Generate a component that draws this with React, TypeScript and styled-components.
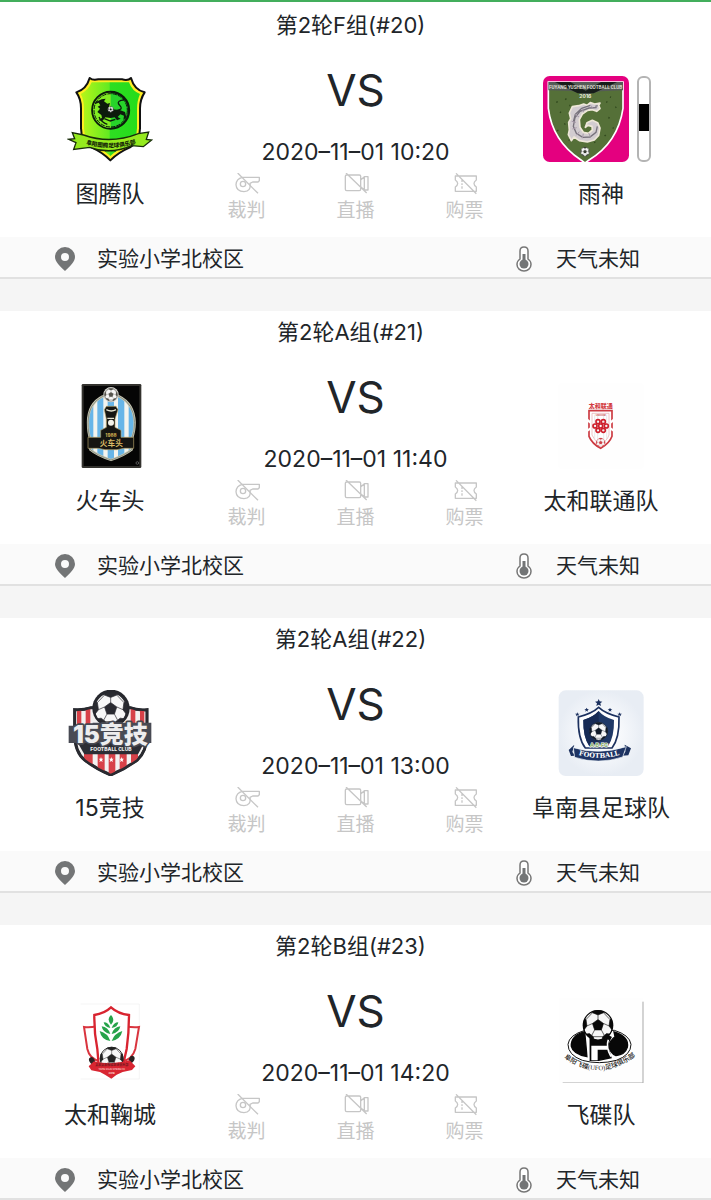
import React, { useId } from "react";
import styled, { createGlobalStyle } from "styled-components";

const GlobalStyle = createGlobalStyle`
  * { box-sizing: border-box; }
  body {
    margin: 0;
    background: #f5f5f5;
    color: #212529;
    font-family: Inter, "Noto Sans CJK SC", sans-serif;
    font-size: 21px;
  }
`;

const Page = styled.main`
  border-top: 2px solid #43ae5c;
`;

const MatchList = styled.ul`
  list-style: none;
  margin: 0;
  padding: 2px 0 0;
  display: flex;
  flex-direction: column;
  gap: 32px;
  background: linear-gradient(#fff 0 4px, transparent 4px);
`;

const Card = styled.li`
  background: #fff;
`;

const Title = styled.h2`
  margin: 0;
  padding: 8px 10px 0 0;
  font-size: 22px;
  font-weight: 400;
  line-height: 26px;
  text-align: center;
`;

const Body = styled.div`
  display: grid;
  grid-template-columns: 220px 1fr 220px;
`;

const Team = styled.div`
  display: flex;
  flex-direction: column;
  align-items: center;
  gap: 16px;
  padding-top: 38px;
`;

const Crest = styled.div`
  display: flex;
  gap: 8px;
`;

const CrestSvg = styled.svg`
  display: block;
  width: 86px;
  height: 86px;
`;

const Kit = styled.span<{ $color: string }>`
  width: 14px;
  margin-right: 8px;
  border: 2px solid #b4b4b4;
  border-radius: 6px;
  background: linear-gradient(#fff 0 32%, ${(p) => p.$color} 32% 65%, #fff 65%);
`;

const TeamName = styled.div`
  font-size: 23px;
  line-height: 32px;
  white-space: nowrap;
`;

const Centre = styled.div`
  display: flex;
  flex-direction: column;
  align-items: center;
  padding: 26px 0 12px;
`;

const Versus = styled.div`
  font-size: 44px;
  line-height: 52px;
`;

const Kickoff = styled.time`
  margin-top: 22px;
  font-size: 23px;
  line-height: 28px;
  white-space: nowrap;
`;

const Services = styled.div`
  display: flex;
  gap: 71px;
  margin-top: 7px;
`;

const Service = styled.button`
  display: flex;
  flex-direction: column;
  align-items: center;
  width: 38px;
  padding: 0;
  border: 0;
  background: none;
  color: #c6c6c6;
  font-family: inherit;
  font-size: 19px;
  line-height: 28px;
  white-space: nowrap;
`;

const ServiceSvg = styled.svg`
  display: block;
  width: 26px;
  height: 22px;
  margin-bottom: 2px;
  fill: none;
  stroke: currentColor;
  stroke-width: 4;
  stroke-linejoin: round;
`;

const Info = styled.footer`
  display: grid;
  grid-template-columns: 1fr 199px;
  padding-left: 53px;
  background: #fafafa;
  border-bottom: 2px solid #e1e1e1;
`;

const InfoItem = styled.div`
  display: flex;
  align-items: center;
  gap: 20px;
  height: 40px;
  padding-top: 4px;
  line-height: 36px;
  white-space: nowrap;
`;

const InfoSvg = styled.svg`
  width: 24px;
  height: 26px;
`;

type BallProps = { cx: number; cy: number; r: number; dark?: string };

function Ball({ cx, cy, r, dark = "#111" }: BallProps) {
  const id = useId();
  return (
    <g transform={`translate(${cx} ${cy}) scale(${r / 50})`}>
      <clipPath id={id}>
        <circle r="49" />
      </clipPath>
      <circle r="48" fill="#f7f7f7" stroke={dark} strokeWidth="4" />
      <g clipPath={`url(#${id})`} fill={dark} stroke={dark} strokeWidth="2">
        <path d="M0-19 18-6 11 15H-11L-18-6Z" />
        <path d="M-16-50-18-41 0-34 18-41 16-50Z" />
        <path d="M50-22 39-19 36 2 45 14 54 8Z" />
        <path d="M-50-22-39-19-36 2-45 14-54 8Z" />
        <path d="M14 50 15 37 28 27 42 29 38 46Z" />
        <path d="M-14 50-15 37-28 27-42 29-38 46Z" />
        <path
          fill="none"
          d="M0-19V-34M18-6 36 2M11 15 20 32M-11 15-20 32M-18-6-36 2M18-41 39-19M-18-41-39-19M45 14 42 29M-45 14-42 29M-15 37H15"
        />
      </g>
    </g>
  );
}

function TotemCrest() {
  return (
    <CrestSvg viewBox="51 48 258 258" role="img" aria-label="图腾队">
      <defs>
        <linearGradient id="totem">
          <stop offset="0" stopColor="#b9f519" />
          <stop offset=".48" stopColor="#62ea22" />
          <stop offset=".5" stopColor="#2ede22" />
          <stop offset="1" stopColor="#24dc1a" />
        </linearGradient>
        <path id="totem-arc" d="M102 250Q181 277 270 247" />
      </defs>
      <path
        d="M119 54Q128 62 145 58H216Q234 63 243 54Q253 90 284 97Q270 118 270 145V205Q270 245 240 262Q205 277 181 301Q158 277 124 262Q93 245 93 205V145Q93 116 79 97Q109 88 119 54Z"
        fill="#ffed22"
        stroke="#111"
        strokeWidth="6"
        strokeLinejoin="round"
      />
      <path
        d="M125 67H237Q246 93 270 102Q261 122 261 147V205Q261 238 234 253Q202 269 181 288Q160 269 130 253Q102 238 102 205V147Q102 118 92 102Q116 90 125 67Z"
        fill="url(#totem)"
      />
      <circle cx="182" cy="151" r="55" fill="#27d32a" stroke="#0c1b0c" strokeWidth="7" />
      <path d="M182 98A53 53 0 0 0 182 204Z" fill="#82ed22" />
      <circle cx="182" cy="151" r="50" fill="none" stroke="#0c1b0c" strokeWidth="3" strokeDasharray="13 3" />
      <path
        d="M137 126l18-8 12-2-5 8 10 7 8-2-4 14 11 5 22 2 16 6 4 16-9 8 2-13-11-4-8 8 9 5-11 5-7-9-12 2-16-2-8 10-13-1 11-8-2-8-12-9 8-10-7-6 8-4-5-8-12 5Z"
        fill="#0c1b0c"
      />
      <path
        d="M202 151q19-3 8-14-12-11 3-16 14 0 7-10M147 171q7 16 25 22M163 176l18 7 15-5"
        fill="none"
        stroke="#0c1b0c"
        strokeWidth="4"
      />
      <Ball cx={182} cy={148} r={9} />
      <path
        d="M67 218 101 225Q181 254 265 221L296 216 289 238 305 240 280 260 245 257Q181 285 119 262L71 268 78 248 56 238 74 236Z"
        fill="#95ea1e"
        stroke="#172c09"
        strokeWidth="4"
      />
      <text fontSize="17" fontWeight="900" fill="#142607">
        <textPath href="#totem-arc" startOffset="6">阜阳图腾足球俱乐部</textPath>
      </text>
      <text x="182" y="275" fontSize="8" textAnchor="middle" fontWeight="700" fill="#142607">
        FYTTFC
      </text>
    </CrestSvg>
  );
}

function YushenCrest() {
  const id = useId();
  return (
    <CrestSvg viewBox="42 48 258 258" role="img" aria-label="雨神">
      <clipPath id={id}>
        <rect x="42" y="48" width="258" height="258" rx="20" />
      </clipPath>
      <g clipPath={`url(#${id})`}>
        <rect x="42" y="48" width="258" height="258" fill="#e4007f" />
        <path
          d="M58 66H282V145Q267 247 180 300L168 309 156 300Q70 243 58 145Z"
          fill="#557038"
          stroke="#fff"
          strokeWidth="5"
        />
        <path d="M58 66H282V91L214 94 170 104 128 93 58 91Z" fill="#555b57" />
        <path d="M78 66H124L170 92 216 66H264L194 100H146Z" fill="#171d1a" />
        <path
          d="M82 125l4 2M109 116l3 3M93 156l3 2M106 193l3-2M85 210l2 3M119 239l3 2M232 125l3 2M259 143l3-2M238 173l4 1M251 203l3 2M227 225l3 3M196 246l3 2M121 137l3-1M243 111l3 1"
          stroke="#31491e"
          strokeWidth="5"
        />
        <text x="170" y="86" fontSize="14" fontWeight="600" textAnchor="middle" fill="#e4e4dc" fontFamily="Roboto">
          FUYANG YUSHEN FOOTBALL CLUB
        </text>
        <text x="169" y="114" fontSize="15" fontWeight="700" textAnchor="middle" fill="#f1eee0">
          2016
        </text>
        <path
          d="M213 129 209 136 213 146 203 154 190 149 176 151 160 162 151 179 153 202 163 217 178 220 190 210 189 199 177 196 169 202 174 188 190 181 206 188 213 204 209 226 196 240 175 246 151 242 135 231 127 242 118 224 121 210 119 187 125 176 121 159 130 140 149 137 164 132 174 136 184 128 197 132Z"
          fill="#d2ccd0"
          stroke="#eee7d8"
          strokeWidth="5"
          strokeLinejoin="round"
        />
        <path
          d="M203 143l-23 1-27 10-15 19-5 26 9 21 19 12 22-1 18-14 4-18M184 136l-26 9-19 18-6 23M199 139l7-2"
          fill="none"
          stroke="#77727c"
          strokeWidth="4"
        />
        <path d="M128 184l13 3M130 207l13-4M142 226l9-11M160 235l3-14M184 230l-5-11M139 163l11 8M160 147l4 10M187 137l3 7" stroke="#a89aaa" strokeWidth="3" />
        <Ball cx={168} cy={275} r={14} dark="#3a3f34" />
      </g>
    </CrestSvg>
  );
}

function TrainCrest() {
  const id = useId();
  const shield = "M128 79Q84 101 84 157Q84 190 91 207V239Q111 256 153 270Q194 256 215 239V207Q224 186 224 157Q222 101 177 79Z";
  return (
    <CrestSvg viewBox="21 39 258 258" role="img" aria-label="火车头">
      <clipPath id={id}>
        <path d={shield} />
      </clipPath>
      <rect x="65" y="42" width="179" height="252" rx="4" fill="#33322e" />
      <rect x="71" y="48" width="167" height="240" fill="#050505" />
      <g clipPath={`url(#${id})`}>
        <path fill="#f3f4ef" d="M80 70H230V275H80Z" />
        <path d="M84 70h16v200H84ZM112 70h18v200h-18ZM143 70h19v200h-19ZM174 70h19v200h-19ZM206 70h18v200h-18Z" fill="#67b5e8" />
      </g>
      <path d={shield} fill="none" stroke="#c8c6b3" strokeWidth="7" />
      <path d={shield} fill="none" stroke="#68776e" strokeWidth="2" />
      <path
        d="M139 109H168L174 119 165 147V172L183 181V202H221V235H192L171 239H135L115 235H84V202H122V181L139 172V147L133 119Z"
        fill="#151512"
        stroke="#b6a46b"
        strokeWidth="2"
      />
      <path d="M139 119q15 8 29 0M142 145h20" stroke="#e5e3cf" strokeWidth="4" fill="none" />
      <circle cx="153" cy="158" r="9" fill="#f3f2e9" />
      <circle cx="153" cy="74" r="23" fill="#dadad4" />
      <Ball cx={153} cy={74} r={20} dark="#55544e" />
      <text x="153" y="200" fontSize="14" fontWeight="800" textAnchor="middle" fill="#c8a84e">
        1988
      </text>
      <text x="154" y="227" fontSize="23" fontWeight="700" textAnchor="middle" fill="#d8b965">
        火车头
      </text>
      <circle cx="232" cy="279" r="4" fill="none" stroke="#777" strokeWidth="2" />
    </CrestSvg>
  );
}

function UnicomCrest() {
  return (
    <CrestSvg viewBox="54 39 258 258" role="img" aria-label="太和联通队">
      <rect x="54" y="39" width="258" height="258" rx="12" fill="#fefefe" />
      <text x="182" y="113" fontSize="18" fontWeight="900" textAnchor="middle" fill="#d23b42">
        太和联通
      </text>
      <path d="M147 122H216V199Q208 221 182 235 156 221 147 199Z" fill="#fff" stroke="#cc3a41" strokeWidth="5" />
      <path d="M156 130H207V195Q201 213 182 224 163 213 156 195Z" fill="none" stroke="#e5a8aa" strokeWidth="2" />
      <path d="M164 134v73M173 134v80M191 134v80M200 134v73" stroke="#dedede" strokeWidth="2" />
      <path d="M142 150 152 158M221 150l-10 8M142 182l10-7M221 182l-10-7" stroke="#fff" strokeWidth="7" />
      <text x="182" y="137" fontSize="7" fontWeight="700" textAnchor="middle" fill="#c84c50">
        UNICOM
      </text>
      <g fill="none" stroke="#ce1f2b" strokeWidth="5">
        <circle cx="174" cy="155" r="6" />
        <circle cx="190" cy="155" r="6" />
        <circle cx="165" cy="168" r="6" />
        <circle cx="199" cy="168" r="6" />
        <circle cx="182" cy="168" r="6" />
        <circle cx="174" cy="181" r="6" />
        <circle cx="190" cy="181" r="6" />
      </g>
      <Ball cx={182} cy={218} r={14} dark="#cf4248" />
    </CrestSvg>
  );
}

function FifteenCrest() {
  const id = useId();
  const shield = "M124 98Q98 106 74 104V176Q74 231 105 256Q139 282 182 300Q225 282 261 256Q291 229 291 176V104Q264 107 240 98Z";
  return (
    <CrestSvg viewBox="51 45 258 258" role="img" aria-label="15竞技">
      <clipPath id={id}>
        <path d={shield} />
      </clipPath>
      <path d={shield} fill="#f3f1f0" stroke="#292a30" strokeWidth="9" />
      <g clipPath={`url(#${id})`}>
        <path d="M81 100h13v60H81ZM107 100h14v60h-14ZM242 100h14v60h-14ZM270 100h13v60h-13Z" fill="#d74148" />
        <path d="M102 235h26v65h-26ZM143 235h21v65h-21ZM176 235h20v65h-20ZM209 235h21v65h-21ZM243 235h21v65h-21Z" fill="#d74148" />
        <path d="M72 184H293L264 238H103Z" fill="#2c2d34" />
      </g>
      <path d={shield} fill="none" stroke="#292a30" strokeWidth="7" />
      <circle cx="183" cy="100" r="56" fill="#26272d" />
      <Ball cx={182} cy={102} r={51} dark="#292a30" />
      <path d="M56 152H128V143H304V204H56Z" fill="#484a53" />
      <text
        x="181"
        y="203"
        fontSize="72"
        fontWeight="900"
        textAnchor="middle"
        fill="#ededee"
        stroke="#484a53"
        strokeWidth="10"
        strokeLinejoin="round"
        paintOrder="stroke"
      >
        15竞技
      </text>
      <text x="183" y="228" fontSize="15" fontWeight="800" textAnchor="middle" fill="#eee">
        FOOTBALL CLUB
      </text>
      <g fill="#fff">
        {[153, 184, 215].map((x) => (
          <path key={x} d={`M${x} 246l2 5h5l-4 4 2 6-5-3-5 3 2-6-4-4h5Z`} />
        ))}
      </g>
    </CrestSvg>
  );
}

function FunanCrest() {
  return (
    <CrestSvg viewBox="99 45 258 258" role="img" aria-label="阜南县足球队">
      <defs>
        <radialGradient id="funan">
          <stop offset="0" stopColor="#fff" />
          <stop offset=".45" stopColor="#f7f9fc" />
          <stop offset="1" stopColor="#e8edf4" />
        </radialGradient>
        <path id="funan-arc" d="M158 239Q223 259 292 237" />
      </defs>
      <rect x="101" y="46" width="255" height="257" rx="21" fill="url(#funan)" />
      <g fill="#1c315f">
        <path d="M221 72l3 7 8 1-6 5 2 8-7-4-7 4 2-8-6-5 8-1Z" />
        <path d="M185 98l2 4h5l-4 3 1 5-4-3-4 3 1-5-4-3h5ZM255 98l2 4h5l-4 3 1 5-4-3-4 3 1-5-4-3h5ZM157 112l2 4h5l-4 3 1 5-4-3-4 3 1-5-4-3h5ZM284 112l2 4h5l-4 3 1 5-4-3-4 3 1-5-4-3h5Z" />
      </g>
      <path
        d="M221 97Q202 115 160 126 158 190 181 219H261Q284 189 282 126 240 115 221 97Z"
        fill="#fff"
        stroke="#1c315f"
        strokeWidth="5"
      />
      <path d="M221 108Q204 127 175 135 174 186 193 214H249Q268 186 267 135 237 127 221 108Z" fill="#203967" />
      <path d="M175 135Q205 126 221 108V214H193Q174 186 175 135Z" fill="#172b55" />
      <Ball cx={221} cy={169} r={28} dark="#111a28" />
      <text x="222" y="216" fontSize="16" fontWeight="700" textAnchor="middle" fill="#82a85c" stroke="#fff" strokeWidth="3" paintOrder="stroke">
        A·B·FC
      </text>
      <path d="M131 225 148 209 142 231 151 242 138 243ZM318 220 299 209 301 230 292 242 310 241Z" fill="#1c315f" />
      <path d="M145 218Q221 241 304 215L293 246Q221 270 149 247Z" fill="#1e3464" stroke="#eef4f9" strokeWidth="2" />
      <text fontSize="20" fontWeight="700" fill="#fff" fontFamily="DejaVu Serif">
        <textPath href="#funan-arc" startOffset="3">FOOTBALL</textPath>
      </text>
    </CrestSvg>
  );
}

function CuchengCrest() {
  const id = useId();
  return (
    <CrestSvg viewBox="51 36 258 258" role="img" aria-label="太和鞠城">
      <clipPath id={id}>
        <path d="M125 180H240V242H125Z" />
      </clipPath>
      <path d="M92 57H268V282H92" fill="none" stroke="#f0f0f0" strokeWidth="2" />
      <path d="M102 126Q120 128 140 124L151 229Q119 223 112 192ZM267 126Q250 128 227 124L217 229Q247 223 256 192Z" fill="#fff" stroke="#d9343e" strokeWidth="6" />
      <path d="M183 67Q164 85 133 90 132 143 142 192L146 240H219L230 192Q237 142 237 90 204 86 183 67Z" fill="#fff" stroke="#d82430" strokeWidth="7" />
      <g clipPath={`url(#${id})`}>
        <Ball cx={185} cy={221} r={36} dark="#232323" />
      </g>
      <path d="M183 90Q169 103 183 119 197 105 183 90Z" fill="#26a34a" />
      <g fill="#26a34a">
        <path d="M181 129Q176 112 161 112 163 126 181 129ZM185 129Q191 112 205 112 203 127 185 129ZM181 147Q174 126 155 124 158 143 181 147ZM185 147Q192 126 211 124 208 143 185 147ZM181 168Q173 144 149 138 154 165 181 168ZM185 168Q193 145 217 138 212 163 185 168Z" />
      </g>
      <ellipse cx="126" cy="227" rx="8" ry="11" fill="#292222" transform="rotate(-30 126 227)" />
      <ellipse cx="245" cy="223" rx="8" ry="11" fill="#292222" transform="rotate(25 245 223)" />
      <path d="M116 244 132 229Q184 242 239 226L256 244 246 255 218 261 200 269 184 281 165 269 150 261 124 256Z" fill="#d82531" />
      <text x="185" y="244" fontSize="9" fontWeight="700" textAnchor="middle" fill="#73171e">
        太和太和鞠城足球俱乐部
      </text>
      <text x="185" y="254" fontSize="7" fontWeight="600" textAnchor="middle" fill="#ffd8cf">
        TAIHE CUJU CHENG FC
      </text>
      <text x="185" y="266" fontSize="8" fontWeight="700" textAnchor="middle" fill="#ffd8cf">
        2018
      </text>
    </CrestSvg>
  );
}

function UfoCrest() {
  return (
    <CrestSvg viewBox="39 36 258 258" role="img" aria-label="飞碟队">
      <path id="ufo-arc" d="M57 218Q160 296 274 212" fill="none" />
      <path d="M42 38H294V294H42Z" fill="#fefefe" />
      <path d="M294 50V294H53" fill="none" stroke="#a9a9a9" strokeWidth="3" />
      <path d="M69 178Q72 150 120 136H208Q254 150 258 178 258 210 214 226 163 240 112 226 69 210 69 178Z" fill="#fff" stroke="#111" strokeWidth="3" />
      <path
        d="M119 140Q77 152 79 184 84 207 126 215ZM134 149H184L198 157Q182 181 194 205L198 218 161 226H135ZM207 141Q253 155 247 187 240 209 213 212 194 204 192 183 195 166 210 155Z"
        fill="#080808"
        stroke="#080808"
        strokeWidth="4"
      />
      <path d="M139 182H188V194H158V226H139Z" fill="#fff" />
      <path d="M131 150V227M190 164q-8 22 8 51" stroke="#fff" strokeWidth="5" fill="none" />
      <Ball cx={159} cy={121} r={46} dark="#090909" />
      <text fontSize="20" fontWeight="500" fill="#202020" fontFamily="Liberation Serif, Noto Sans CJK SC">
        <textPath href="#ufo-arc">阜阳飞碟(UFO)足球俱乐部</textPath>
      </text>
    </CrestSvg>
  );
}

const WhistleIcon = () => (
  <ServiceSvg viewBox="69 39 78 66" aria-hidden="true">
    <path d="M91 52H145V62L141 66H125L117 70Q121 94 99 95 76 94 75 74 76 56 94 52" />
    <circle cx="96" cy="72" r="8" />
    <path d="M80 39 141 100" />
  </ServiceSvg>
);

const CameraIcon = () => (
  <ServiceSvg viewBox="396 39 78 66" aria-hidden="true">
    <path d="M407 45H445Q449 45 449 49V88Q449 92 445 92H407Q403 92 403 88V49Q403 45 407 45ZM449 60 460 50H471V90H460L449 80M460 50V90M405 39 467 99" />
  </ServiceSvg>
);

const TicketIcon = () => (
  <ServiceSvg viewBox="723 39 78 66" aria-hidden="true">
    <path d="M733 48H796V60Q782 70 796 81V94H733V81Q747 70 733 60ZM753 59V66M753 70V75M753 79V86M735 40 796 101" />
  </ServiceSvg>
);

const PinIcon = () => (
  <InfoSvg viewBox="0 0 24 26" aria-hidden="true">
    <path
      fill="#737576"
      fillRule="evenodd"
      d="M12 1A10 10 0 0 0 2 11C2 16 7 20 12 25 17 20 22 16 22 11A10 10 0 0 0 12 1ZM12 7A4 4 0 1 1 12 15 4 4 0 0 1 12 7Z"
    />
  </InfoSvg>
);

const ThermometerIcon = () => (
  <InfoSvg viewBox="0 0 48 52" aria-hidden="true">
    <path
      d="M16 26V10Q16 2 24 2T32 10V26Q38 30 38 37A14 13 0 0 1 10 37Q10 30 16 26Z"
      fill="#fff"
      stroke="#777"
      strokeWidth="3"
    />
    <path d="M24 16V36" stroke="#737576" strokeWidth="6" />
    <circle cx="24" cy="36" r="9" fill="#737576" />
  </InfoSvg>
);

const services = [
  { label: "裁判", Icon: WhistleIcon },
  { label: "直播", Icon: CameraIcon },
  { label: "购票", Icon: TicketIcon },
];

type Side = { name: string; Logo: () => React.ReactElement; kit?: string };
type Match = { title: string; time: string; home: Side; away: Side };

const matches: Match[] = [
  {
    title: "第2轮F组(#20)",
    time: "2020–11–01 10:20",
    home: { name: "图腾队", Logo: TotemCrest },
    away: { name: "雨神", Logo: YushenCrest, kit: "#000" },
  },
  {
    title: "第2轮A组(#21)",
    time: "2020–11–01 11:40",
    home: { name: "火车头", Logo: TrainCrest },
    away: { name: "太和联通队", Logo: UnicomCrest },
  },
  {
    title: "第2轮A组(#22)",
    time: "2020–11–01 13:00",
    home: { name: "15竞技", Logo: FifteenCrest },
    away: { name: "阜南县足球队", Logo: FunanCrest },
  },
  {
    title: "第2轮B组(#23)",
    time: "2020–11–01 14:20",
    home: { name: "太和鞠城", Logo: CuchengCrest },
    away: { name: "飞碟队", Logo: UfoCrest },
  },
];

function TeamSide({ name, Logo, kit }: Side) {
  return (
    <Team>
      <Crest>
        <Logo />
        {kit && <Kit $color={kit} />}
      </Crest>
      <TeamName>{name}</TeamName>
    </Team>
  );
}

export default function App() {
  return (
    <Page>
      <GlobalStyle />
      <MatchList>
        {matches.map((m) => (
          <Card key={m.title}>
            <Title>{m.title}</Title>
            <Body>
              <TeamSide {...m.home} />
              <Centre>
                <Versus>VS</Versus>
                <Kickoff>{m.time}</Kickoff>
                <Services>
                  {services.map(({ label, Icon }) => (
                    <Service key={label} type="button" disabled>
                      <Icon />
                      {label}
                    </Service>
                  ))}
                </Services>
              </Centre>
              <TeamSide {...m.away} />
            </Body>
            <Info>
              <InfoItem>
                <PinIcon />
                实验小学北校区
              </InfoItem>
              <InfoItem>
                <ThermometerIcon />
                天气未知
              </InfoItem>
            </Info>
          </Card>
        ))}
      </MatchList>
    </Page>
  );
}
